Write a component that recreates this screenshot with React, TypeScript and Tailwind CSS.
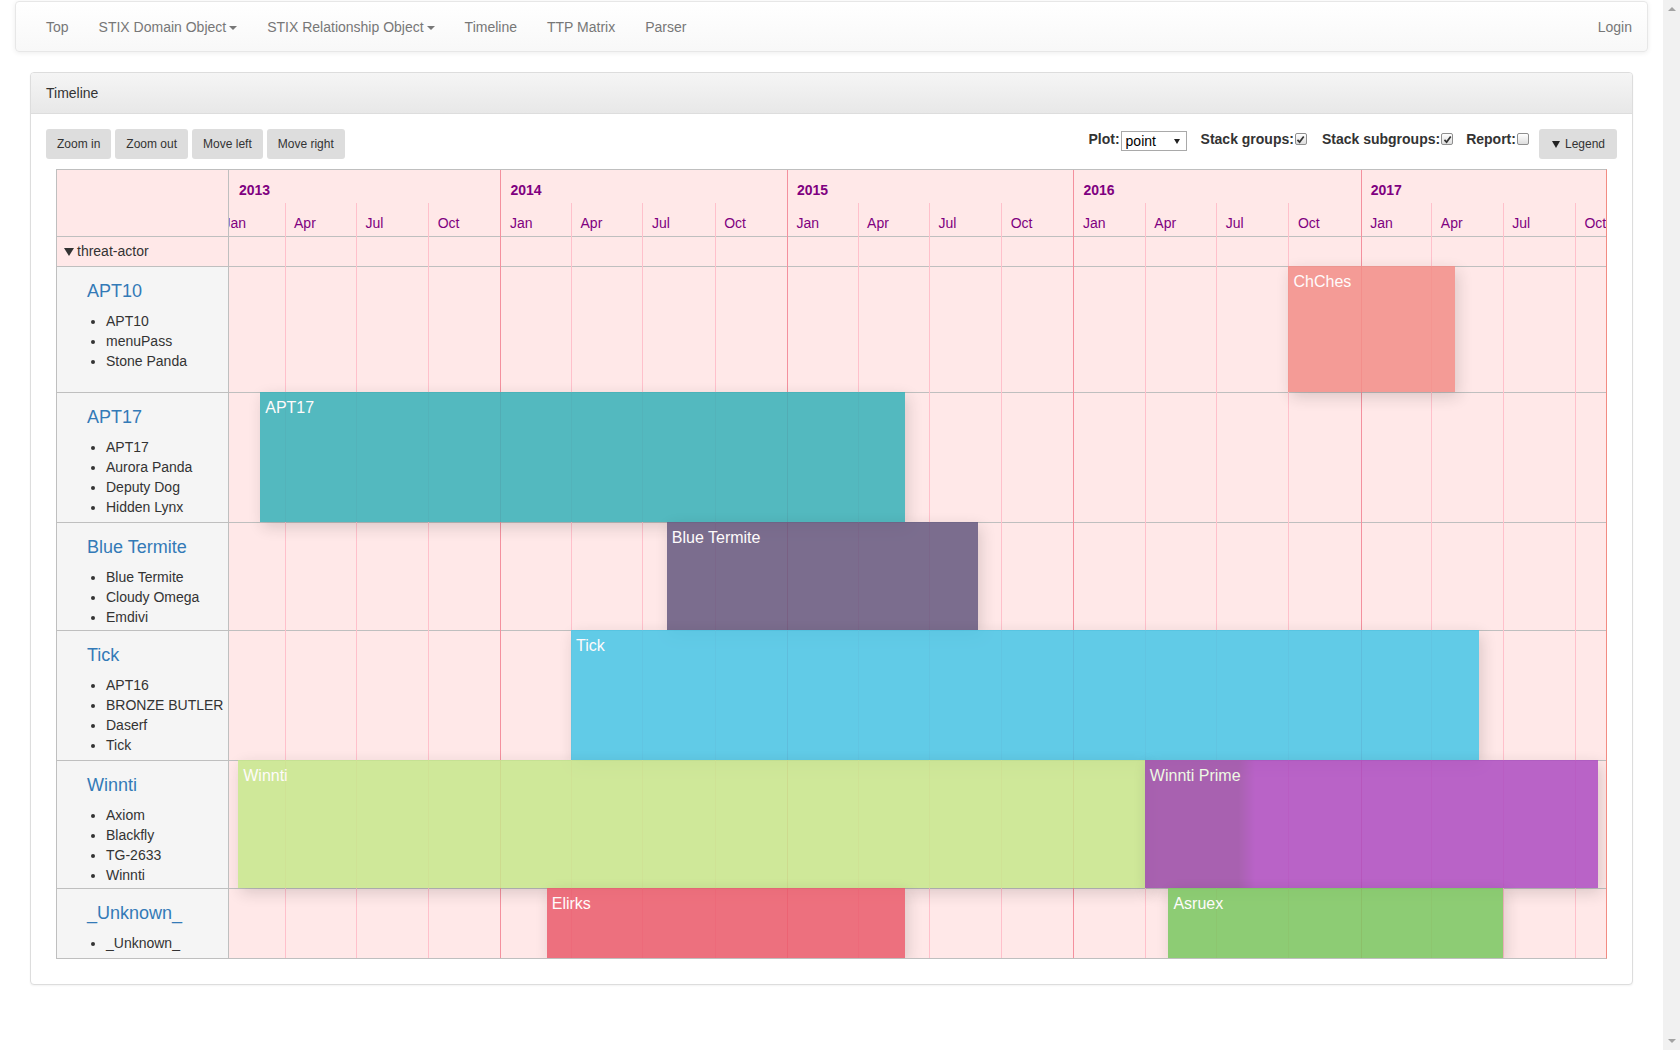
const PPD = 0.78495;

const dayNum = (s: string) => {
  const [y, m, d] = s.split("-").map(Number);
  return Date.UTC(y, m - 1, d) / 86400000;
};

// visible window starts a little after Jan 1 2013
const ORIGIN = dayNum("2014-01-01") - 271.4 / PPD;
const xOf = (s: string) => (dayNum(s) - ORIGIN) * PPD;

const HEADER_H = 67;
const THREAT_H = 30;

type Group = { name: string; aliases: string[]; height: number; h: string; last?: boolean };

const groups: Group[] = [
  { name: "APT10", aliases: ["APT10", "menuPass", "Stone Panda"], height: 126, h: "h-[126px]" },
  { name: "APT17", aliases: ["APT17", "Aurora Panda", "Deputy Dog", "Hidden Lynx"], height: 130, h: "h-[130px]" },
  { name: "Blue Termite", aliases: ["Blue Termite", "Cloudy Omega", "Emdivi"], height: 108, h: "h-[108px]" },
  { name: "Tick", aliases: ["APT16", "BRONZE BUTLER", "Daserf", "Tick"], height: 130, h: "h-[130px]" },
  { name: "Winnti", aliases: ["Axiom", "Blackfly", "TG-2633", "Winnti"], height: 128, h: "h-[128px]" },
  { name: "_Unknown_", aliases: ["_Unknown_"], height: 69, h: "h-[69px]", last: true },
];

const rowTops: number[] = [];
groups.reduce((top, g) => {
  rowTops.push(top);
  return top + g.height;
}, HEADER_H + THREAT_H);

type Item = { label: string; group: number; start: string; end: string; bg: string };

const items: Item[] = [
  { label: "ChChes", group: 0, start: "2016-10-01", end: "2017-05-01", bg: "bg-[#f38e88]" },
  { label: "APT17", group: 1, start: "2013-03-01", end: "2015-06-01", bg: "bg-[#36b1b8]" },
  { label: "Blue Termite", group: 2, start: "2014-08-01", end: "2015-09-01", bg: "bg-[#64587f]" },
  { label: "Tick", group: 3, start: "2014-04-01", end: "2017-06-01", bg: "bg-[#46c6e7]" },
  { label: "Winnti", group: 4, start: "2013-02-01", end: "2016-04-01", bg: "bg-[#c7e88c]" },
  { label: "Winnti Prime", group: 4, start: "2016-04-01", end: "2017-10-30", bg: "bg-[#ad4cc2]" },
  { label: "Elirks", group: 5, start: "2014-03-01", end: "2015-06-01", bg: "bg-[#eb5c6c]" },
  { label: "Asruex", group: 5, start: "2016-05-01", end: "2017-07-01", bg: "bg-[#7ac860]" },
];

const years = [2013, 2014, 2015, 2016, 2017];
const months = [
  { m: "01", name: "Jan" },
  { m: "04", name: "Apr" },
  { m: "07", name: "Jul" },
  { m: "10", name: "Oct" },
];

function Caret() {
  return (
    <span className="ml-[3px] inline-block h-0 w-0 border-x-[4px] border-t-[4px] border-x-transparent border-t-[#777] align-middle" />
  );
}

function Check({ checked }: { checked?: boolean }) {
  return (
    <span className="mt-[4px] ml-px inline-flex h-[12px] w-[12px] items-center justify-center rounded-[2px] border border-[#8f8f8f] bg-linear-to-b from-white to-[#dedede]">
      {checked && (
        <svg viewBox="0 0 10 10" className="h-[9px] w-[9px]">
          <path d="M1.6 5.4 L4 7.9 L8.6 1.6" fill="none" stroke="#333" strokeWidth="1.9" />
        </svg>
      )}
    </span>
  );
}

function Btn({ children }: { children: React.ReactNode }) {
  return (
    <button className="h-[30px] rounded-[3px] bg-[#dddddd] px-[11px] text-[12px] leading-none text-[#333]">
      {children}
    </button>
  );
}

function Navbar() {
  const links = ["Top", "STIX Domain Object", "STIX Relationship Object", "Timeline", "TTP Matrix", "Parser"];
  return (
    <nav className="mx-[15px] mt-px mb-[20px] flex h-[51px] items-center justify-between rounded-[4px] border border-[#e7e7e7] bg-linear-to-b from-white to-[#f8f8f8] px-[15px] text-[14px] leading-[20px] text-[#777] shadow-[inset_0_1px_0_rgba(255,255,255,0.15),0_1px_5px_rgba(0,0,0,0.075)]">
      <ul className="flex">
        {links.map((l) => (
          <li key={l} className="px-[15px]">
            {l}
            {l.startsWith("STIX") && <Caret />}
          </li>
        ))}
      </ul>
      <span className="pl-[15px]">Login</span>
    </nav>
  );
}

function Controls() {
  return (
    <div className="flex items-start justify-between">
      <div className="flex gap-[4px]">
        <Btn>Zoom in</Btn>
        <Btn>Zoom out</Btn>
        <Btn>Move left</Btn>
        <Btn>Move right</Btn>
      </div>
      <div className="flex items-start text-[14px] leading-[20px] font-bold text-[#333]">
        <span>Plot:</span>
        <span className="mt-[2px] ml-px flex h-[20px] w-[66px] items-center justify-between border border-[#a9a9a9] bg-white pr-[6px] pl-[4px] font-normal text-black">
          point
          <span className="inline-block h-0 w-0 border-x-[3px] border-t-[5px] border-x-transparent border-t-[#222]" />
        </span>
        <span className="ml-[14px]">Stack groups:</span>
        <Check checked />
        <span className="ml-[15px]">Stack subgroups:</span>
        <Check checked />
        <span className="ml-[13px]">Report:</span>
        <Check />
        <button className="ml-[10px] flex h-[30px] items-center rounded-[3px] bg-[#dddddd] pr-[12px] pl-[13px] text-[12px] font-normal text-[#333]">
          <span className="mr-[5px] inline-block h-0 w-0 border-x-[4px] border-t-[7px] border-x-transparent border-t-[#222]" />
          Legend
        </button>
      </div>
    </div>
  );
}

function LabelColumn() {
  return (
    <div className="flex w-[172px] shrink-0 flex-col border-r border-[#bfbfbf]">
      <div className="h-[67px] shrink-0 border-b border-[#bfbfbf] bg-[#ffe8e8]" />
      <div className="flex h-[30px] shrink-0 items-center border-b border-[#bfbfbf] bg-[#ffe8e8] pl-[7px] text-[14px] text-[#333]">
        <span className="mr-[3px] inline-block h-0 w-0 border-x-[5px] border-t-[8px] border-x-transparent border-t-[#333]" />
        threat-actor
      </div>
      {groups.map((g) => (
        <div
          key={g.name}
          className={`${g.h} shrink-0 overflow-hidden bg-[#f5f5f5] pt-[14px] pl-[30px] ${g.last ? "" : "border-b border-[#bfbfbf]"}`}
        >
          <div className="text-[18px] leading-[20px] text-[#337ab7]">{g.name}</div>
          <ul className="mt-[10px] list-disc pl-[19px] text-[14px] leading-[20px] whitespace-nowrap text-[#333]">
            {g.aliases.map((a) => (
              <li key={a}>{a}</li>
            ))}
          </ul>
        </div>
      ))}
    </div>
  );
}

function AxisColumn() {
  const yearLines = years.map((y) => ({ y, x: xOf(`${y}-01-01`) }));
  const monthLines = years.flatMap((y) =>
    months.map((m) => ({ key: `${y}-${m.m}`, name: m.name, x: xOf(`${y}-${m.m}-01`) })),
  );
  const prime = items.find((i) => i.label === "Winnti Prime")!;

  return (
    <div className="relative flex-1 overflow-hidden bg-[#ffe8e8]">
      <div className="h-[67px] border-b border-[#bfbfbf]" />
      <div className="h-[30px] border-b border-[#bfbfbf]" />
      {groups.map((g) => (
        <div key={g.name} className={`${g.h} ${g.last ? "" : "border-b border-[#bfbfbf]"}`} />
      ))}

      {monthLines
        .filter((l) => !l.key.endsWith("-01") && l.x > 0)
        .map((l) => (
          <div key={l.key} className="absolute top-[33px] bottom-0 w-px bg-[#ffc0cb]" style={{ left: Math.round(l.x) }} />
        ))}
      {yearLines
        .filter((l) => l.x > 0)
        .map((l) => (
          <div key={l.y} className="absolute top-0 bottom-0 w-px bg-[#f4909e]" style={{ left: Math.round(l.x) }} />
        ))}

      {yearLines.map((l) => (
        <span
          key={l.y}
          className="absolute top-[10px] text-[14px] leading-[20px] font-bold text-[#800080]"
          style={{ left: Math.max(l.x + 10, 10) }}
        >
          {l.y}
        </span>
      ))}
      {monthLines.map((l) => (
        <span
          key={l.key}
          className="absolute top-[43px] text-[14px] leading-[20px] text-[#800080]"
          style={{ left: l.x + 9.5 }}
        >
          {l.name}
        </span>
      ))}

      <div
        className="absolute w-[110px] bg-linear-to-r from-[#8fe04a] from-[85%] to-transparent"
        style={{ left: xOf(prime.start), top: rowTops[4] - 1, height: groups[4].height }}
      />

      {items.map((it) => {
        const left = xOf(it.start);
        const g = groups[it.group];
        return (
          <div
            key={it.label}
            className={`absolute overflow-hidden opacity-85 shadow-[3px_5px_14px_rgba(0,0,0,0.16)] ${it.bg}`}
            style={{
              left,
              width: xOf(it.end) - left,
              top: rowTops[it.group] - 1,
              height: g.height + (g.last ? 1 : 0),
            }}
          >
            <span className="block px-[5px] pt-[5px] text-[16px] leading-[21px] whitespace-nowrap text-white">
              {it.label}
            </span>
          </div>
        );
      })}
    </div>
  );
}

export default function App() {
  return (
    <div className="flex h-[1050px] w-full overflow-hidden bg-white [font-family:'Liberation_Sans',Arial,sans-serif]">
      <main className="min-w-0 flex-1">
        <Navbar />
        <section className="mx-[30px] rounded-[4px] border border-[#dddddd] bg-white shadow-[0_1px_2px_rgba(0,0,0,0.05)]">
          <div className="rounded-t-[3px] border-b border-[#dddddd] bg-linear-to-b from-[#f5f5f5] to-[#e8e8e8] px-[15px] py-[10px] text-[14px] leading-[20px] text-[#333]">
            Timeline
          </div>
          <div className="px-[15px] pt-[15px] pb-[15px]">
            <Controls />
            <div className="mx-[10px] mt-[10px] mb-[10px] flex h-[790px] border border-[#bfbfbf] border-r-[#f28b82]">
              <LabelColumn />
              <AxisColumn />
            </div>
          </div>
        </section>
      </main>
      <aside className="flex w-[17px] shrink-0 flex-col items-center justify-between bg-[#f1f1f1] pt-[7px] pb-[7px]">
        <span className="h-0 w-0 border-x-[4px] border-b-[4px] border-x-transparent border-b-[#a3a3a3]" />
        <span className="h-0 w-0 border-x-[4px] border-t-[4px] border-x-transparent border-t-[#a3a3a3]" />
      </aside>
    </div>
  );
}
